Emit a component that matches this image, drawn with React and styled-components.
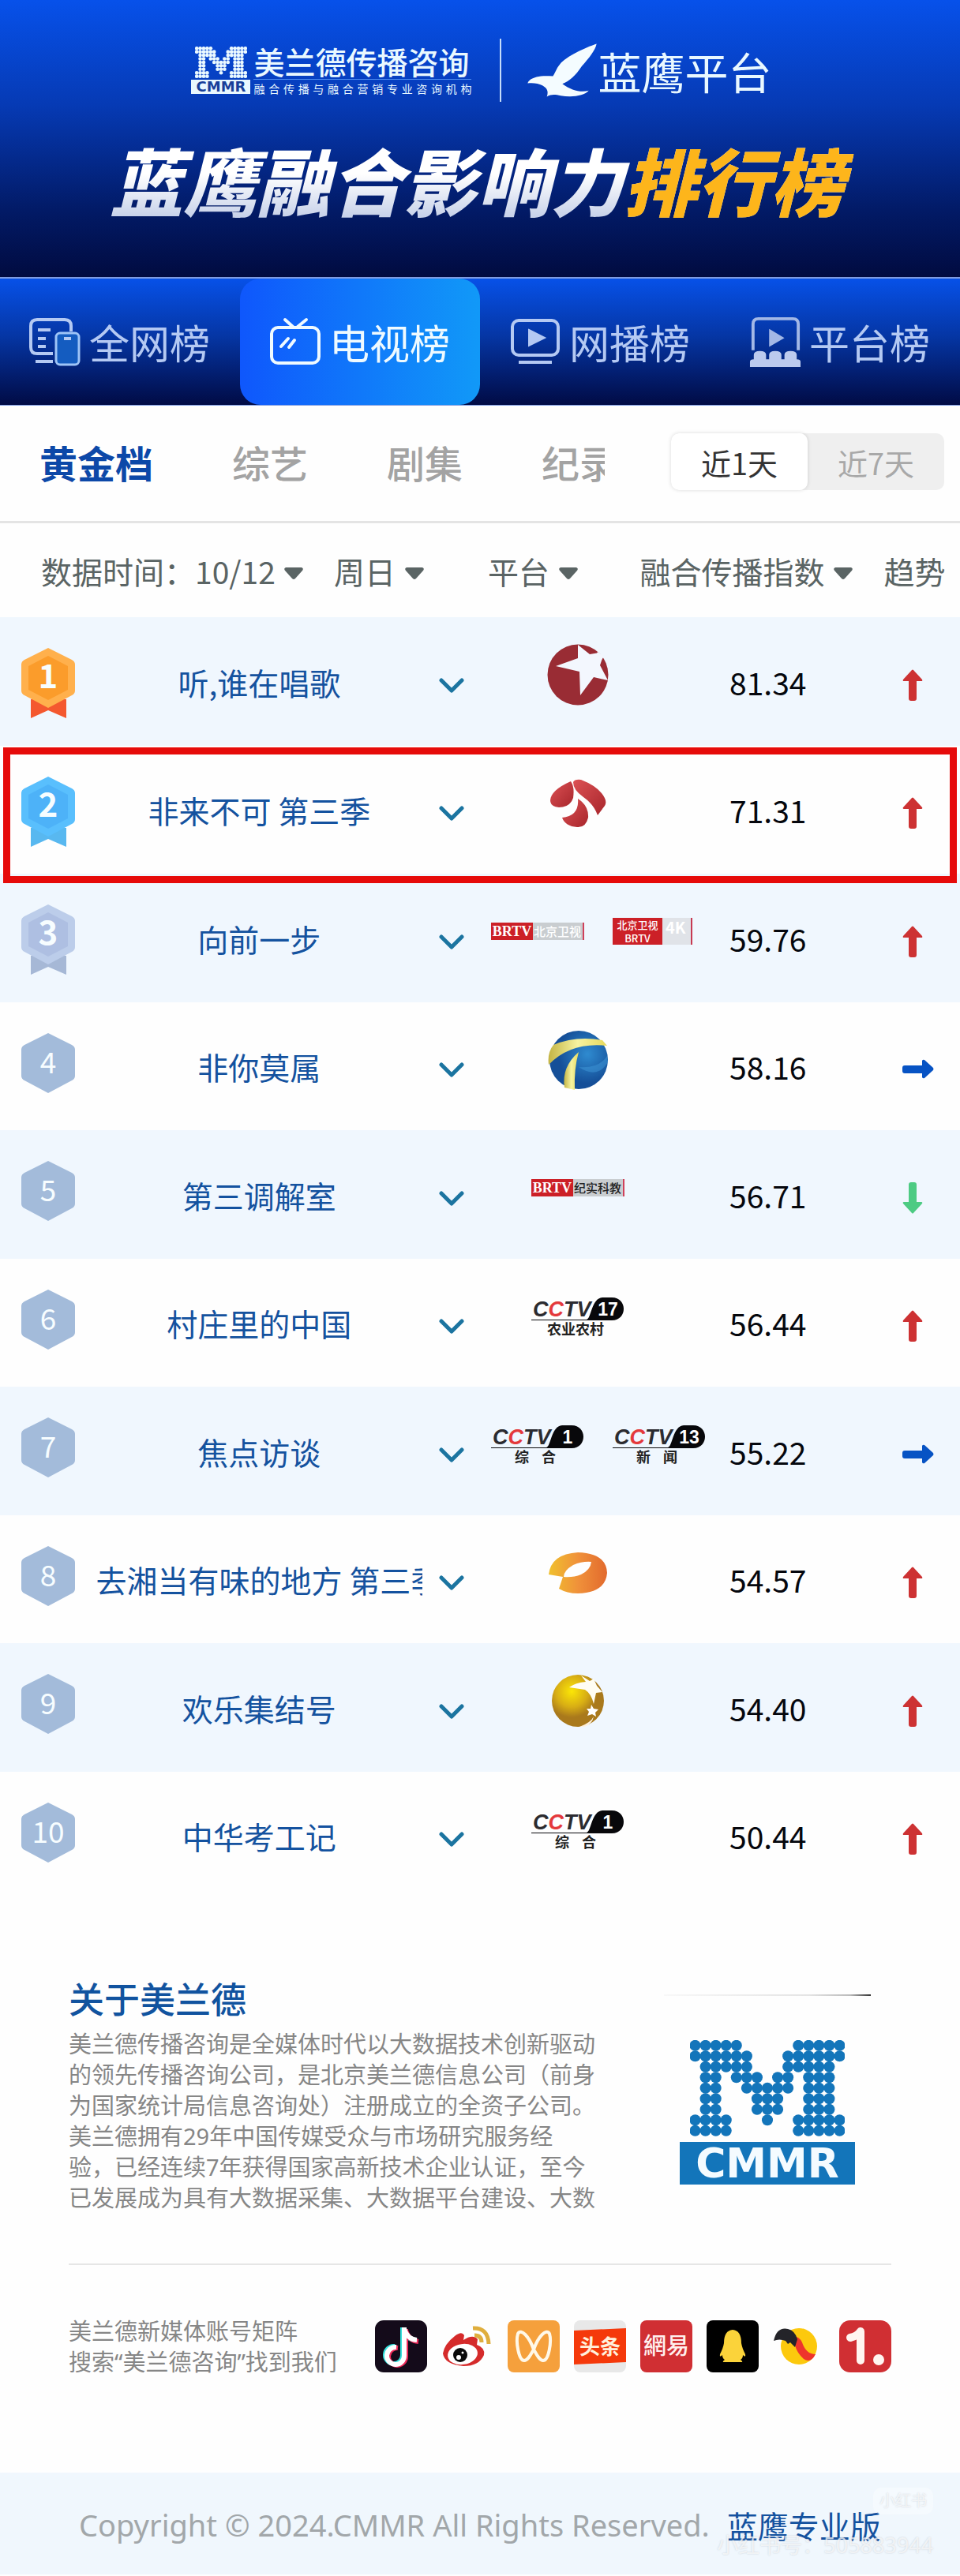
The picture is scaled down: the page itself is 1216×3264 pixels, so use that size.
import React, { useState } from "react";
import styled, { createGlobalStyle } from "styled-components";

const GlobalStyle = createGlobalStyle`
  * {
    box-sizing: border-box;
  }
  body {
    margin: 0;
    background: #fefefe;
    font-family: "Noto Sans CJK SC", sans-serif;
  }
  button,
  select {
    margin: 0;
    padding: 0;
    border: 0;
    background: none;
    font: inherit;
    color: inherit;
    cursor: pointer;
  }
  a {
    text-decoration: none;
  }
`;

// top banner
const Banner = styled.header`
  display: flex;
  flex-direction: column;
  align-items: center;
  padding: 49px 20px 58px 24px;
  background: linear-gradient(#0751ea, #063ab4 38%, #021a66 76%, #010b40);
`;
const Brands = styled.div`
  display: flex;
  align-items: center;
  height: 80px;
`;
const Company = styled.div`
  display: flex;
  align-items: center;
  gap: 4px;
  padding-right: 36px;
`;
const CompanyMark = styled.div`
  display: flex;
  flex-direction: column;
  align-items: center;
  gap: 2px;
  width: 75px;
`;
const MarkLabel = styled.span`
  width: 100%;
  background: ${(props) => props.$background};
  color: ${(props) => props.$color};
  font-family: "DejaVu Sans", sans-serif;
  font-size: ${(props) => props.$size}px;
  font-weight: 700;
  line-height: ${(props) => props.$height}px;
  text-align: center;
`;
const CompanyText = styled.div`
  width: 276px;
  color: #e9f8ff;
`;
const CompanyName = styled.div`
  padding-bottom: 2px;
  border-bottom: 1px solid #4f8df0;
  font-size: 39px;
  font-weight: 500;
  line-height: 42px;
  white-space: nowrap;
`;
const CompanyTagline = styled.div`
  font-size: 14px;
  line-height: 22px;
  text-align-last: justify;
`;
const Platform = styled.div`
  display: flex;
  align-items: center;
  height: 80px;
  padding-left: 32px;
  border-left: 2px solid #c5dcfa;
  color: #e9f8ff;
  font-size: 55px;
  font-weight: 400;
  line-height: 72px;
`;
const Headline = styled.h1`
  margin: 32px 0 0;
  padding-right: 12px;
  font-size: 93px;
  font-style: italic;
  font-weight: 900;
  line-height: 132px;
  white-space: nowrap;
  color: transparent;
  background: linear-gradient(#fff 45%, #c9d3ea 85%);
  background-clip: text;
`;
const Gold = styled.span`
  color: #fdb51b;
`;

// main navigation
const Nav = styled.nav`
  display: grid;
  grid-template-columns: repeat(4, 1fr);
  height: 163px;
  border-top: 2px solid #7f9be0;
  border-bottom: 1px solid #7f9be0;
  background: linear-gradient(#0751e8, #0536a5 45%, #010b45);
`;
const NavItem = styled.button`
  display: flex;
  align-items: center;
  gap: 10px;
  padding-left: 37px;
  border-radius: 26px;
  color: ${(props) => (props.$active ? "#effaff" : "#b4c9f3")};
  background: ${(props) =>
    props.$active ? "linear-gradient(90deg, #0f57fc, #1199f8)" : "none"};
  font-size: 51px;
  line-height: 70px;
  white-space: nowrap;
`;

// category tabs and period switch
const TabBar = styled.div`
  display: flex;
  align-items: center;
  justify-content: space-between;
  height: 149px;
  padding: 0 20px 4px 50px;
  border-bottom: 3px solid #e4e4e4;
`;
const Tabs = styled.div`
  display: flex;
  gap: 100px;
  max-width: 716px;
  overflow: hidden;
`;
const Tab = styled.button`
  flex: none;
  color: ${(props) => (props.$active ? "#0c48a8" : "#a3a3a3")};
  font-size: 48px;
  font-weight: ${(props) => (props.$active ? 700 : 500)};
  line-height: 70px;
`;
const Periods = styled.div`
  display: flex;
  width: 346px;
  height: 72px;
  border-radius: 10px;
  background: #efefef;
`;
const Period = styled.button`
  flex: 1;
  border-radius: 10px;
  color: ${(props) => (props.$active ? "#333" : "#a8a8a8")};
  background: ${(props) => (props.$active ? "#fff" : "none")};
  box-shadow: ${(props) => (props.$active ? "0 0 5px rgba(0, 0, 0, 0.14)" : "none")};
  font-size: 38px;
`;

// filters above the ranking
const Filters = styled.div`
  display: grid;
  grid-template-columns: 50% 17% 1fr auto;
  align-items: center;
  height: 119px;
  padding: 0 20px 0 52px;
  padding-right: 32px;
  color: #5a6464;
  font-size: 39px;
  line-height: 56px;
  white-space: nowrap;
`;
const FilterGroup = styled.div`
  display: flex;
  align-items: center;
`;
const Picker = styled.div`
  display: flex;
  align-items: center;
  gap: 10px;
  margin-right: 38px;
  svg {
    margin-top: 8px;
  }
`;
const Select = styled.select`
  appearance: none;
  line-height: 56px;
`;

// ranking
const Ranking = styled.table`
  width: 100%;
  border-collapse: collapse;
  table-layout: fixed;
  font-size: 39px;
`;
const Row = styled.tr`
  position: relative;
  height: 162px;
  &:nth-child(odd) {
    height: 163px;
    background: #f0f7fe;
  }
`;
const Cell = styled.td`
  padding: 0;
  text-align: center;
  color: #05070d;
`;
const RankCell = styled.td`
  padding: 36px 0 0 26px;
  vertical-align: top;
`;
const LogoCell = styled.td`
  padding: 0;
  vertical-align: top;
`;
const Logos = styled.div`
  display: flex;
  align-items: center;
  justify-content: ${(props) => (props.$pair ? "flex-start" : "center")};
  gap: 36px;
  height: 146px;
  padding-left: ${(props) => (props.$pair ? 14 : 0)}px;
  padding-right: ${(props) => (props.$pair ? 0 : 44)}px;
`;
const TrendCell = styled.td`
  padding: 14px 0 0 97px;
`;
const ShowName = styled.div`
  display: flex;
  justify-content: safe center;
  overflow: hidden;
  color: #14529f;
  line-height: 56px;
  white-space: nowrap;
`;
const Marker = styled.span`
  position: absolute;
  z-index: 1;
  top: 2px;
  right: 4px;
  bottom: -12px;
  left: 4px;
  border: 9px solid #e60b0a;
  pointer-events: none;
`;
const Channel = styled.span`
  display: flex;
  flex: none;
  width: 118px;
  height: 22px;
  border-right: 2px solid #d0405a;
  background: #c9cdd0;
  color: ${(props) => (props.$light ? "#fff" : "#222")};
  font-size: 15px;
  font-weight: 500;
  line-height: 22px;
  white-space: nowrap;
`;
const ChannelBrand = styled.b`
  width: 53px;
  margin-right: 1px;
  background: #cc2027;
  color: #fff;
  font-family: "Liberation Serif", serif;
  font-size: 18px;
  text-align: center;
`;
const Channel4K = styled.span`
  display: flex;
  flex: none;
  width: 101px;
  height: 34px;
  border-right: 2px solid #c73a52;
  background: #e0e3e8;
  color: #fff;
  font-size: 20px;
  font-weight: 700;
  line-height: 24px;
`;
const Channel4KBrand = styled.span`
  width: 63px;
  margin-right: 4px;
  background: #cc2027;
  font-size: 13px;
  font-weight: 500;
  line-height: 17px;
  text-align: center;
`;

// about
const About = styled.section`
  padding: 91px 87px 0;
`;
const AboutBody = styled.div`
  display: flex;
  justify-content: space-between;
  padding-bottom: 64px;
  border-bottom: 2px solid #e6e6e6;
`;
const AboutTitle = styled.h2`
  margin: 0 0 4px;
  color: #11539f;
  font-size: 45px;
  font-weight: 500;
  line-height: 68px;
`;
const Muted = styled.p`
  margin: 0;
  color: #868686;
  font-family: "Noto Sans", "Noto Sans CJK SC", sans-serif;
  font-size: 29px;
  line-height: 39px;
  white-space: nowrap;
`;
const AboutLogo = styled.div`
  display: flex;
  flex-direction: column;
  align-items: center;
  gap: 7px;
  width: 262px;
  margin-right: 26px;
  padding: 0 20px;
`;
const LogoRule = styled.div`
  align-self: stretch;
  height: 2px;
  margin: 29px -20px 49px;
  background: linear-gradient(90deg, #f8f8f8, #e4e4e4 70%, #bbb 90%, #333);
`;
const Social = styled.div`
  display: flex;
  align-items: center;
  justify-content: space-between;
  height: 206px;
`;
const Accounts = styled.div`
  display: flex;
  gap: 18px;
`;
const Account = styled.a`
  display: flex;
  width: 66px;
  height: 66px;
`;

// footer
const Footer = styled.footer`
  position: relative;
  display: flex;
  align-items: center;
  gap: 22px;
  height: 129px;
  margin-top: 57px;
  padding: 2px 100px 0;
  background: #f0f7fd;
  color: #a2a7aa;
  font-family: "Noto Sans", "Noto Sans CJK SC", sans-serif;
  font-size: 38px;
  white-space: nowrap;
`;
const ProLink = styled.a`
  color: #14529f;
  font-size: 39px;
`;
const Watermark = styled.div`
  position: absolute;
  right: 34px;
  bottom: 20px;
  display: flex;
  flex-direction: column;
  align-items: flex-end;
  gap: 22px;
  color: rgba(255, 255, 255, 0.7);
  font-size: 27px;
  line-height: 34px;
  text-shadow: 0 0 2px rgba(120, 130, 140, 0.35);
`;
const WatermarkTag = styled.span`
  padding: 0 8px;
  border-radius: 10px;
  background: rgba(255, 255, 255, 0.35);
  font-size: 20px;
`;

const M_DOTS = [
  "xxxxx.....xxxxx",
  "xxxxxx...xxxxxx",
  ".xxxxx...xxxxx.",
  ".xx.xxx.xx.xxx.",
  ".xx..xxxxx.xxx.",
  ".xx...xxx..xxx.",
  ".xx...xxx..xxx.",
  "xxxx...x..xxxxx",
  "xxxx......xxxxx",
];

const DottedM = ({ width, height, color }) => (
  <svg width={width} height={height} viewBox="0 0 195 122" preserveAspectRatio="none" fill={color}>
    {M_DOTS.map((line, y) =>
      line.split("").map((dot, x) =>
        dot === "x" ? (
          <circle key={`${x}-${y}`} cx={x * 13 + 6.5} cy={y * 13.5 + 6.8} r="7" />
        ) : null
      )
    )}
  </svg>
);

const Eagle = () => (
  <svg width="90" height="72" viewBox="80 20 270 215" fill="#f4fcff">
    <path d="M346 27C302 42 232 74 207 104C192 122 189 138 180 150C152 148 134 149 118 153C100 158 88 165 84 177C105 174 125 178 140 185C156 194 165 205 157 228C174 217 190 220 210 224C250 231 300 226 316 205C285 213 250 204 216 179C243 170 266 148 290 112C318 80 341 52 346 27Z" />
  </svg>
);

const NavIcon = ({ name }) => {
  if (name === "all") {
    return (
      <svg width="66" height="62" viewBox="0 0 66 62" fill="none" stroke="#b4c9f3" strokeWidth="4">
        <path d="M30 46H10Q2 46 2 38V11Q2 3 10 3H45Q53 3 53 11V18" />
        <path d="M11 16H27M11 27H21M11 37H21M8 56H30" />
        <rect x="34" y="20" width="29" height="40" rx="5" fill="#145cc0" stroke="#9ec4f7" strokeWidth="3" />
        <path d="M44 27H53" />
      </svg>
    );
  }
  if (name === "tv") {
    return (
      <svg width="66" height="62" viewBox="0 0 66 62" fill="none" stroke="#effaff" strokeWidth="4" strokeLinecap="round">
        <rect x="3" y="13" width="60" height="45" rx="8" />
        <path d="M20 3L30 12M47 3L36 12M24 27L15 37M32 29L25 38" />
      </svg>
    );
  }
  if (name === "web") {
    return (
      <svg width="66" height="62" viewBox="-2 0 66 62" fill="none" stroke="#b4c9f3" strokeWidth="4">
        <rect x="2" y="4" width="58" height="44" rx="8" />
        <path d="M23 16L43 26L23 36Z" fill="#b4c9f3" strokeWidth="2" />
        <path d="M10 57H52" />
      </svg>
    );
  }
  return (
    <svg width="66" height="66" viewBox="0 0 68 66" fill="none" stroke="#a3b8e6" strokeWidth="4">
      <path d="M5 44V10Q5 3 12 3H57Q64 3 64 10V44" />
      <path d="M27 18L44 28L27 38Z" fill="#a3b8e6" strokeWidth="2" />
      <path
        d="M1 66V59Q1 56 6 56V50Q6 45 14 45Q22 45 22 50V56H26V50Q26 45 34 45Q42 45 42 50V56H46V50Q46 45 54 45Q62 45 62 50V56Q67 56 67 59V66Z"
        fill="#bccaee"
        stroke="none"
      />
    </svg>
  );
};

const Caret = () => (
  <svg width="26" height="17" viewBox="0 0 26 17" fill="#5a6464">
    <path d="M3 1H23Q26 2 24 5L15 15Q13 17 11 15L2 5Q0 2 3 1Z" />
  </svg>
);

const Chevron = () => (
  <svg width="32" height="22" viewBox="0 0 32 22" fill="none" stroke="#1b74a0" strokeWidth="5" strokeLinecap="round" strokeLinejoin="round">
    <path d="M3 3L16 16L29 3" />
  </svg>
);

const MEDALS = {
  1: { outer: "#ffb04c", inner: "#fb9c2b", ribbon: "#f4582f" },
  2: { outer: "#59bffd", inner: "#4db2f8", ribbon: "#58b8f0" },
  3: { outer: "#bccdea", inner: "#aebfe2", ribbon: "#a6b8d6" },
};

const RankBadge = ({ rank }) => {
  const medal = MEDALS[rank];
  return (
    <svg width="70" height="92" viewBox="0 0 70 92">
      {medal && <path d="M13 68H58V92L35 82L13 92Z" fill={medal.ribbon} />}
      <path
        d="M35 3L65 18Q69 20 69 24V57Q69 61 65 63L35 79L5 63Q1 61 1 57V24Q1 20 5 18Z"
        fill={medal ? medal.outer : "#a3bbda"}
      />
      {medal && <path d="M35 13L60 26V56L35 69L10 56V26Z" fill={medal.inner} />}
      <text
        x="35"
        y="54"
        textAnchor="middle"
        fill="#f7fdff"
        fontSize={medal ? 42 : 37}
        fontWeight={medal ? 700 : 400}
      >
        {rank}
      </text>
    </svg>
  );
};

const TREND_COLORS = { up: "#cd3233", down: "#4dcb83", flat: "#0753c4" };

const Trend = ({ to }) =>
  to === "flat" ? (
    <svg width="40" height="40" viewBox="0 0 40 40" fill={TREND_COLORS.flat}>
      <path d="M3 15H25V9Q26 7 28 8L39 18Q40 20 39 21L28 31Q26 32 25 30V25H3Q0 25 0 22V18Q0 15 3 15Z" />
    </svg>
  ) : (
    <svg width="26" height="40" viewBox="0 0 26 40" fill={TREND_COLORS[to]}>
      <path
        transform={to === "down" ? "rotate(180 13 20)" : undefined}
        d="M12 1Q13 0 14 1L25 13Q26 15 24 15H18V37Q18 40 15 40H11Q8 40 8 37V15H2Q0 15 1 13Z"
      />
    </svg>
  );

const CctvLogo = styled.svg`
  flex: none;
`;

const Cctv = ({ number, label, spaced }) => (
  <CctvLogo width="118" height="66" viewBox="0 0 118 66">
    <text x="2" y="33" fontFamily="Liberation Sans, sans-serif" fontSize="27" fontWeight="700" fontStyle="italic" fill="#2b2b30">
      C<tspan fill="#e4393c">C</tspan>TV
    </text>
    <path d="M0 37H70C76 36 76 10 90 9H102C122 9 122 38 102 38H0Z" fill="#08080b" />
    <text x="97" y="32" textAnchor="middle" fontFamily="Liberation Sans, sans-serif" fontSize="23" fontWeight="700" fill="#fff">
      {number}
    </text>
    <g fontSize="18" fontWeight="700" fill="#222">
      {spaced ? (
        <>
          <text x="30" y="56">{label[0]}</text>
          <text x="64" y="56">{label[1]}</text>
        </>
      ) : (
        <text x="56" y="56" textAnchor="middle">{label}</text>
      )}
    </g>
  </CctvLogo>
);

const Brtv = ({ label, light }) => (
  <Channel $light={light}>
    <ChannelBrand>BRTV</ChannelBrand>
    {label}
  </Channel>
);

const Beijing4K = () => (
  <Channel4K>
    <Channel4KBrand>
      北京卫视
      <br />
      BRTV
    </Channel4KBrand>
    4K
  </Channel4K>
);

const StarDisc = () => (
  <svg width="78" height="78" viewBox="0 0 78 78">
    <circle cx="39" cy="39" r="38.5" fill="#992c34" />
    <path d="M39 1L54 13L66 11L70 18L67 27L77 46L59 42L42 65L41 35L11 28L39 18Z" fill="#f3f7fe" />
    <path d="M64 10L72 16L69 20L62 14Z" fill="#f3f7fe" />
  </svg>
);

const Jiangsu = () => (
  <svg width="72" height="62" viewBox="0 0 72 62">
    <defs>
      <linearGradient id="petal" x1="0" y1="0" x2="1" y2="1">
        <stop offset="0" stopColor="#dc5154" />
        <stop offset="1" stopColor="#a8262c" />
      </linearGradient>
    </defs>
    <g fill="url(#petal)">
      <path d="M27 3Q32 10 30 24Q26 36 12 36Q1 35 1 27Q2 14 27 3Z" />
      <path d="M30 4Q32 0 40 1Q58 8 66 18Q74 28 70 34L61 46Q56 32 43 23Q30 14 30 4Z" />
      <path d="M36 25Q50 34 49 49Q46 62 35 61Q20 60 16 49Q38 47 36 25Z" />
    </g>
  </svg>
);

const Tianjin = () => (
  <svg width="78" height="78" viewBox="0 0 78 78">
    <defs>
      <radialGradient id="globe" cx="0.65" cy="0.4">
        <stop offset="0" stopColor="#2f8bd0" />
        <stop offset="1" stopColor="#154f98" />
      </radialGradient>
      <linearGradient id="band">
        <stop offset="0" stopColor="#c4b444" />
        <stop offset="0.5" stopColor="#f6f3a0" />
        <stop offset="1" stopColor="#e6d95c" />
      </linearGradient>
    </defs>
    <circle cx="40" cy="39" r="37" fill="url(#globe)" />
    <path d="M8 20Q36 8 70 14L76 21Q30 16 2 45Q0 30 8 20Z" fill="url(#band)" />
    <path d="M40 29Q18 48 22 74L35 77Q34 50 40 29Z" fill="url(#band)" />
    <path d="M76 34Q66 50 40 48Q64 64 77 42Z" fill="#3f97d8" opacity="0.5" />
  </svg>
);

const Zhejiang = () => (
  <svg width="76" height="54" viewBox="0 0 76 54">
    <defs>
      <linearGradient id="swirl">
        <stop offset="0" stopColor="#f0c02e" />
        <stop offset="0.5" stopColor="#f0913a" />
        <stop offset="1" stopColor="#e26a2d" />
      </linearGradient>
    </defs>
    <path
      d="M1 29Q4 3 38 1Q74 2 75 27Q73 52 38 53Q24 53 14 47L19 32ZM20 32Q32 33 42 29Q54 23 55 13Q44 12 32 17Q20 24 20 32Z"
      fill="url(#swirl)"
      fillRule="evenodd"
    />
  </svg>
);

const GoldGlobe = () => (
  <svg width="68" height="68" viewBox="0 0 68 68">
    <defs>
      <radialGradient id="gold" cx="0.38" cy="0.32">
        <stop offset="0" stopColor="#fbe606" />
        <stop offset="0.6" stopColor="#d8ae14" />
        <stop offset="1" stopColor="#a9791c" />
      </radialGradient>
    </defs>
    <circle cx="34" cy="34" r="33" fill="url(#gold)" />
    <path d="M38 2L44 10Q31 11 23 17L43 20Q51 25 54 38L57 24L65 23L58 15L54 6L49 9Z" fill="#fffdf3" />
    <path d="M51 39L54 44L60 45L56 49L57 54L52 51L46 53L48 48L45 44L50 44Z" fill="#fff" />
    <path d="M36 67Q50 62 54 54Q52 64 42 67Z" fill="#fff0dc" />
  </svg>
);

const SHOWS = [
  { name: "听,谁在唱歌", score: "81.34", trend: "up", logos: [<StarDisc />] },
  { name: "非来不可 第三季", score: "71.31", trend: "up", logos: [<Jiangsu />], marked: true },
  { name: "向前一步", score: "59.76", trend: "up", logos: [<Brtv label="北京卫视" light />, <Beijing4K />] },
  { name: "非你莫属", score: "58.16", trend: "flat", logos: [<Tianjin />] },
  { name: "第三调解室", score: "56.71", trend: "down", logos: [<Brtv label="纪实科教" />] },
  { name: "村庄里的中国", score: "56.44", trend: "up", logos: [<Cctv number="17" label="农业农村" />] },
  {
    name: "焦点访谈",
    score: "55.22",
    trend: "flat",
    logos: [<Cctv number="1" label="综合" spaced />, <Cctv number="13" label="新闻" spaced />],
  },
  { name: "去湘当有味的地方 第三季", score: "54.57", trend: "up", logos: [<Zhejiang />] },
  { name: "欢乐集结号", score: "54.40", trend: "up", logos: [<GoldGlobe />] },
  { name: "中华考工记", score: "50.44", trend: "up", logos: [<Cctv number="1" label="综合" spaced />] },
];

const NAV_ITEMS = [
  { icon: "all", label: "全网榜" },
  { icon: "tv", label: "电视榜" },
  { icon: "web", label: "网播榜" },
  { icon: "platform", label: "平台榜" },
];

const ACCOUNTS = [
  {
    name: "抖音",
    art: (
      <>
        <rect width="66" height="66" rx="11" fill="#140b1a" />
        <g fill="none" strokeWidth="6">
          <path d="M35 9V44A11 11 0 1 1 25 33M35 13Q39 24 51 25" stroke="#35e0dc" />
          <path d="M39 11V46A11 11 0 1 1 29 35M39 13Q43 26 55 27" stroke="#ef2b5b" />
          <path d="M37 9V45A11 11 0 1 1 27 34M37 11Q41 24 53 25" stroke="#fff" />
        </g>
      </>
    ),
  },
  {
    name: "微博",
    art: (
      <>
        <path d="M17 20Q26 13 29 19L28 25Q40 17 46 24L45 31Q56 35 54 44Q48 58 28 58Q4 56 2 42Q4 30 17 20Z" fill="#d52b2b" />
        <ellipse cx="27" cy="43" rx="19" ry="13" fill="#fff" transform="rotate(-8 27 43)" />
        <circle cx="24" cy="44" r="9" fill="#0b0b0b" />
        <circle cx="22" cy="47" r="3" fill="#fff" />
        <circle cx="27" cy="41" r="1.5" fill="#fff" />
        <path d="M40 10Q59 9 60 30M42 19Q51 19 51 28" fill="none" stroke="#dfae3d" strokeWidth="5" />
      </>
    ),
  },
  {
    name: "视频号",
    art: (
      <>
        <rect width="66" height="66" rx="8" fill="#f5a03c" />
        <path
          d="M33 37C27 20 17 10 13 17C10 27 14 51 21 51C26 51 30 42 33 37C36 42 40 51 45 51C52 51 56 27 53 17C49 10 39 20 33 37Z"
          fill="none"
          stroke="#fff8e8"
          strokeWidth="4"
          strokeLinejoin="round"
        />
      </>
    ),
  },
  {
    name: "头条号",
    art: (
      <>
        <rect width="66" height="66" rx="8" fill="#e8e8e8" />
        <path d="M0 13L66 10V53L0 56Z" fill="#f5390b" />
        <text x="33" y="43" textAnchor="middle" fontSize="26" fontWeight="700" fill="#fff0dc">头条</text>
      </>
    ),
  },
  {
    name: "网易号",
    art: (
      <>
        <rect width="66" height="66" rx="8" fill="#d02f33" />
        <text x="33" y="43" textAnchor="middle" fontSize="29" fontWeight="500" fill="#fff0ee">網易</text>
      </>
    ),
  },
  {
    name: "企鹅号",
    art: (
      <>
        <rect width="66" height="66" rx="8" fill="#000" />
        <path d="M33 12Q44 13 44 29Q45 35 49 43Q50 48 46 44Q46 48 43 50Q46 52 45 53H21Q20 52 23 50Q20 48 20 44Q16 48 17 43Q21 35 22 29Q22 13 33 12Z" fill="#fbd33a" />
      </>
    ),
  },
  {
    name: "搜狐号",
    art: (
      <>
        <circle cx="33" cy="33" r="23" fill="#fcc90d" />
        <path d="M20 22Q32 17 37 28Q42 43 54 43Q48 55 39 49Q31 42 28 32Z" fill="#ee342c" />
        <path d="M1 26Q5 8 19 11Q28 13 31 24L28 34L22 28L19 30L16 26Q8 23 1 26Z" fill="#242429" />
      </>
    ),
  },
  {
    name: "一点号",
    art: (
      <>
        <rect width="66" height="66" rx="14" fill="#d02f33" />
        <path d="M14 22Q23 20 27 14V51" fill="none" stroke="#fff5f0" strokeWidth="10" strokeLinecap="round" strokeLinejoin="round" />
        <circle cx="50" cy="50" r="7" fill="#fff5f0" />
      </>
    ),
  },
];

export default function App() {
  const [nav, setNav] = useState("tv");
  const [tab, setTab] = useState("黄金档");
  const [period, setPeriod] = useState("近1天");

  return (
    <>
      <GlobalStyle />
      <Banner>
        <Brands>
          <Company>
            <CompanyMark>
              <DottedM width={66} height={40} color="#e9f8ff" />
              <MarkLabel $background="#e9f8ff" $color="#173f9a" $size={18} $height={18}>
                CMMR
              </MarkLabel>
            </CompanyMark>
            <CompanyText>
              <CompanyName>美兰德传播咨询</CompanyName>
              <CompanyTagline>融合传播与融合营销专业咨询机构</CompanyTagline>
            </CompanyText>
          </Company>
          <Platform>
            <Eagle />
            蓝鹰平台
          </Platform>
        </Brands>
        <Headline>
          蓝鹰融合影响力<Gold>排行榜</Gold>
        </Headline>
      </Banner>

      <Nav>
        {NAV_ITEMS.map((item) => (
          <NavItem key={item.icon} $active={nav === item.icon} onClick={() => setNav(item.icon)}>
            <NavIcon name={item.icon} />
            {item.label}
          </NavItem>
        ))}
      </Nav>

      <TabBar>
        <Tabs>
          {["黄金档", "综艺", "剧集", "纪录"].map((label) => (
            <Tab key={label} $active={tab === label} onClick={() => setTab(label)}>
              {label}
            </Tab>
          ))}
        </Tabs>
        <Periods>
          {["近1天", "近7天"].map((label) => (
            <Period key={label} $active={period === label} onClick={() => setPeriod(label)}>
              {label}
            </Period>
          ))}
        </Periods>
      </TabBar>

      <Filters>
        <FilterGroup>
          <label htmlFor="date">数据时间：</label>
          <Picker>
            <Select id="date">
              <option>10/12</option>
            </Select>
            <Caret />
          </Picker>
          <Picker>
            <Select aria-label="周日">
              <option>周日</option>
            </Select>
            <Caret />
          </Picker>
        </FilterGroup>
        <Picker>
          <Select aria-label="平台">
            <option>平台</option>
          </Select>
          <Caret />
        </Picker>
        <Picker>
          <Select aria-label="融合传播指数">
            <option>融合传播指数</option>
          </Select>
          <Caret />
        </Picker>
        <span>趋势</span>
      </Filters>

      <Ranking>
        <colgroup>
          <col width="10%" />
          <col width="34%" />
          <col width="6%" />
          <col width="24%" />
          <col width="12%" />
          <col width="14%" />
        </colgroup>
        <tbody>
          {SHOWS.map((show, index) => (
            <Row key={show.name}>
              <RankCell>
                <RankBadge rank={index + 1} />
                {show.marked && <Marker />}
              </RankCell>
              <Cell>
                <ShowName>{show.name}</ShowName>
              </Cell>
              <Cell>
                <button aria-label={show.name}>
                  <Chevron />
                </button>
              </Cell>
              <LogoCell>
                <Logos $pair={show.logos.length > 1}>
                  {show.logos.map((logo, i) => (
                    <React.Fragment key={i}>{logo}</React.Fragment>
                  ))}
                </Logos>
              </LogoCell>
              <Cell>{show.score}</Cell>
              <TrendCell>
                <Trend to={show.trend} />
              </TrendCell>
            </Row>
          ))}
        </tbody>
      </Ranking>

      <About>
        <AboutBody>
          <div>
            <AboutTitle>关于美兰德</AboutTitle>
            <Muted>
              美兰德传播咨询是全媒体时代以大数据技术创新驱动
              <br />
              的领先传播咨询公司，是北京美兰德信息公司（前身
              <br />
              为国家统计局信息咨询处）注册成立的全资子公司。
              <br />
              美兰德拥有29年中国传媒受众与市场研究服务经
              <br />
              验，已经连续7年获得国家高新技术企业认证，至今
              <br />
              已发展成为具有大数据采集、大数据平台建设、大数
            </Muted>
          </div>
          <AboutLogo>
            <LogoRule />
            <DottedM width={196} height={122} color="#1375ba" />
            <MarkLabel $background="#1375ba" $color="#f4fbff" $size={52} $height={54}>
              CMMR
            </MarkLabel>
          </AboutLogo>
        </AboutBody>
        <Social>
          <Muted>
            美兰德新媒体账号矩阵
            <br />
            搜索“美兰德咨询”找到我们
          </Muted>
          <Accounts>
            {ACCOUNTS.map((account) => (
              <Account key={account.name} href="#" aria-label={account.name}>
                <svg width="66" height="66" viewBox="0 0 66 66">
                  {account.art}
                </svg>
              </Account>
            ))}
          </Accounts>
        </Social>
      </About>

      <Footer>
        <span>Copyright © 2024.CMMR All Rights Reserved.</span>
        <ProLink href="#">蓝鹰专业版</ProLink>
        <Watermark>
          <WatermarkTag>小红书</WatermarkTag>
          <span>小红书号：505883944</span>
        </Watermark>
      </Footer>
    </>
  );
}
